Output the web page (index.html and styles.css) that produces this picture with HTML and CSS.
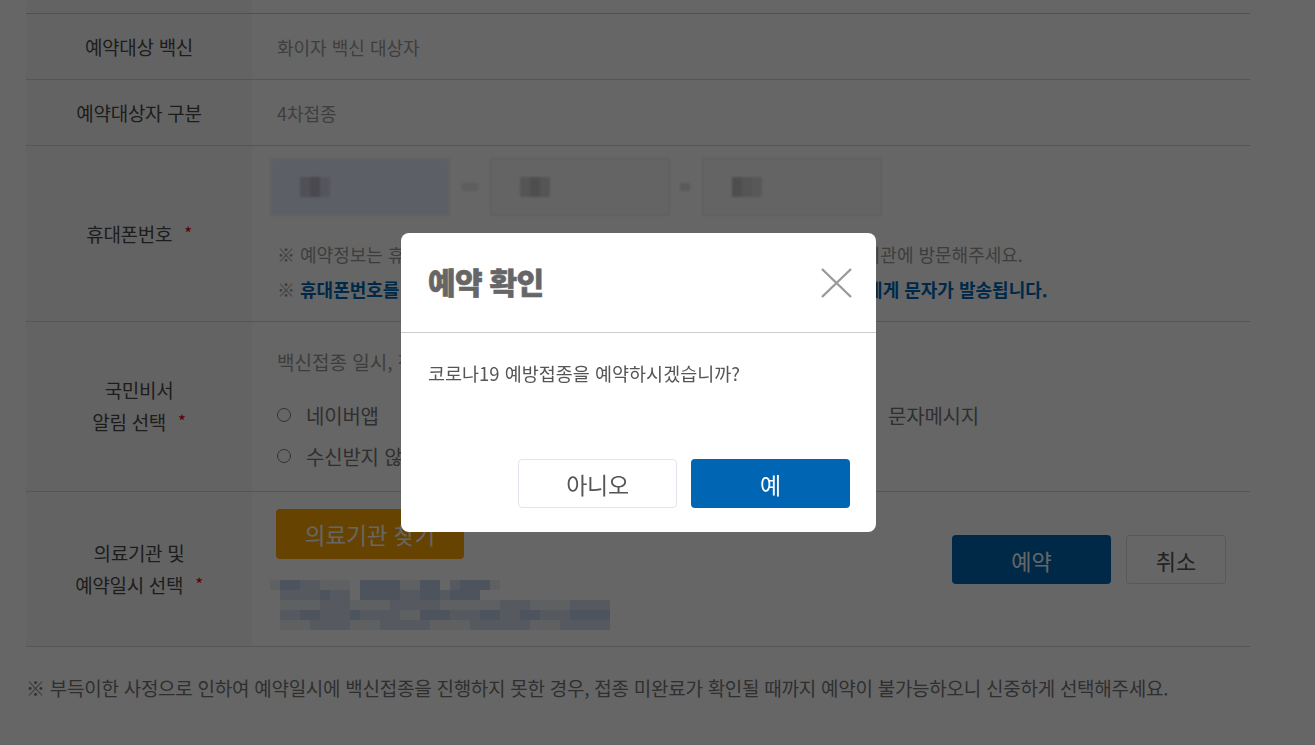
FILE: index.html
```html
<!DOCTYPE html>
<html lang="ko">
<head>
<meta charset="utf-8">
<title>예약 확인</title>
<link rel="stylesheet" href="styles.css">
</head>
<body>
<div class="page">
  <div class="form">
    <div class="row row-top"><div class="th"></div><div class="td"></div></div>
    <div class="row row-s">
      <div class="th"><span>예약대상 백신</span></div>
      <div class="td val">화이자 백신 대상자</div>
    </div>
    <div class="row row-s">
      <div class="th"><span>예약대상자 구분</span></div>
      <div class="td val">4차접종</div>
    </div>
    <div class="row row-phone">
      <div class="th"><span>휴대폰번호<span class="req">*</span></span></div>
      <div class="td phone-td">
        <div class="phone">
          <div class="pbox pbox-first"><span class="blk blk-a"></span><span class="blk blk-b"></span><span class="blk blk-c"></span></div>
          <span class="dash"></span>
          <div class="pbox"><span class="blk blk-d"></span><span class="blk blk-e"></span><span class="blk blk-d"></span></div>
          <span class="dash dash-sm"></span>
          <div class="pbox"><span class="blk blk-e"></span><span class="blk blk-d"></span><span class="blk blk-f"></span></div>
        </div>
        <p class="note note-first">※ 예약정보는 휴대폰 문자로 발송되며, 문자를 받지 못하신 경우 예약하신 의료기관에 방문해주세요.</p>
        <p class="note"><span>※</span> <b class="blue">휴대폰번호를 정확하게 입력해주세요. 입력하신 휴대폰번호로 예약하신 본인에게 문자가 발송됩니다.</b></p>
      </div>
    </div>
    <div class="row row-alarm">
      <div class="th th-2"><span>국민비서<br>알림 선택<span class="req">*</span></span></div>
      <div class="td alarm-td">
        <p class="desc">백신접종 일시, 장소 등 안내를 받으실 알림 수단을 선택해주세요.</p>
        <div class="radios">
          <label class="radio"><span class="circle"></span>네이버앱</label>
          <label class="radio"><span class="circle"></span>카카오톡</label>
          <label class="radio"><span class="circle"></span>문자메시지</label>
          <label class="radio"><span class="circle"></span>수신받지 않음</label>
          <label class="radio"><span class="circle"></span>토스</label>
        </div>
      </div>
    </div>
    <div class="row row-hosp">
      <div class="th th-2"><span>의료기관 및<br>예약일시 선택<span class="req">*</span></span></div>
      <div class="td hosp-td">
        <div class="hosp-left">
          <button class="btn-find" type="button">의료기관 찾기</button>
          <div class="mosaic">
            <div class="mrow"><i class="m l w1"></i><i class="m d w2"></i><i class="m n w2"></i><i class="m l w3"></i><i class="m e w1"></i><i class="m d w4"></i><i class="m l w2"></i><i class="m d w2"></i><i class="m e w1"></i><i class="m n w1"></i><i class="m d w3"></i><i class="m l w1"></i></div>
            <div class="mrow mrow-in"><i class="m n w4"></i><i class="m d w1"></i><i class="m n w2"></i><i class="m e w1"></i><i class="m d w4"></i><i class="m n w2"></i><i class="m d w2"></i><i class="m n w1"></i><i class="m d w3"></i></div>
            <div class="mrow mrow-in"><i class="m l w4"></i><i class="m n w3"></i><i class="m l w4"></i><i class="m n w5"></i><i class="m l w6"></i><i class="m n w3"></i><i class="m l w4"></i><i class="m n w4"></i></div>
            <div class="mrow mrow-in"><i class="m n w2"></i><i class="m d w2"></i><i class="m n w3"></i><i class="m d w1"></i><i class="m n w4"></i><i class="m l w2"></i><i class="m d w3"></i><i class="m n w3"></i><i class="m d w2"></i><i class="m n w2"></i><i class="m d w2"></i><i class="m n w3"></i><i class="m d w4"></i></div>
            <div class="mrow mrow-in"><i class="m l w3"></i><i class="m n w4"></i><i class="m l w3"></i><i class="m n w5"></i><i class="m l w4"></i><i class="m n w6"></i><i class="m l w3"></i><i class="m n w5"></i></div>
          </div>
        </div>
        <div class="actions">
          <button class="btn btn-primary" type="button">예약</button>
          <button class="btn btn-line" type="button">취소</button>
        </div>
      </div>
    </div>
  </div>
  <p class="foot">※ 부득이한 사정으로 인하여 예약일시에 백신접종을 진행하지 못한 경우, 접종 미완료가 확인될 때까지 예약이 불가능하오니 신중하게 선택해주세요.</p>
</div>

<div class="overlay"></div>
<div class="modal" role="dialog">
  <div class="modal-head">
    <h2 class="modal-title">예약 확인</h2>
    <button class="modal-close" type="button" aria-label="닫기">
      <svg width="32" height="32" viewBox="0 0 32 32"><path d="M2 2L31 30M31 2L2 30" stroke="#9a9a9a" stroke-width="2.4" fill="none"/></svg>
    </button>
  </div>
  <div class="modal-body">코로나19 예방접종을 예약하시겠습니까?</div>
  <div class="modal-foot">
    <button class="mbtn mbtn-no" type="button">아니오</button>
    <button class="mbtn mbtn-yes" type="button">예</button>
  </div>
</div>
</body>
</html>
```
FILE: styles.css
```css
* { box-sizing: border-box; }
html, body { margin: 0; padding: 0; }
body {
  width: 1315px;
  height: 745px;
  overflow: hidden;
  background: #fff;
  font-family: "Noto Sans CJK KR", "Noto Sans", sans-serif;
  color: #555;
}
p { margin: 0; }
button { font-family: inherit; cursor: pointer; }

.page { padding-left: 26px; width: 1250px; }

.row {
  display: grid;
  grid-template-columns: 226px 998px;
  border-bottom: 1px solid #d4d4d4;
}
.th {
  background: #f8f8f8;
  display: flex;
  align-items: center;
  justify-content: center;
  text-align: center;
  font-size: 19px;
  letter-spacing: -0.3px;
  color: #4a4a4a;
}
.th-2 { line-height: 32px; }
.td { padding-left: 25px; }
.val {
  display: flex;
  align-items: center;
  font-size: 18px;
  color: #9c9c9c;
}
.req { color: #e60012; margin-left: 12px; font-size: 17px; position: relative; top: -2px; }

.row-top { height: 14px; border-bottom-color: #c8c8c8; }
.row-s { height: 66px; }
.row-phone { height: 176px; }
.row-alarm { height: 170px; }
.row-hosp { height: 155px; }

/* phone */
.phone-td { padding-top: 11px; }
.phone {
  display: flex;
  align-items: center;
  margin-left: -7px;
  height: 60px;
  filter: blur(1.2px);
}
.pbox {
  width: 180px;
  height: 58px;
  background: #fbfbfb;
  border: 2px solid #eeeeee;
  display: flex;
  align-items: center;
  padding-left: 28px;
}
.pbox-first { background: #e6edfd; border-color: #f2f2f2; }
.blk { display: inline-block; width: 10px; height: 20px; }
.blk-a { background: #c9c9d6; }
.blk-b { background: #b6b6c6; }
.blk-c { background: #d3d8e6; }
.blk-d { background: #d6d4d4; }
.blk-e { background: #c6c2c2; }
.blk-f { background: #dcdcdc; }
.dash { width: 40px; height: 8px; background: linear-gradient(90deg, transparent 12px, #eaeaea 12px, #eaeaea 28px, transparent 28px); }
.dash-sm { width: 32px; background: linear-gradient(90deg, transparent 10px, #e2e2e2 10px, #e2e2e2 20px, transparent 20px); }

.note {
  font-size: 18px;
  line-height: 35px;
  color: #9a9a9a;
  white-space: nowrap;
}
.note-first { margin-top: 20px; }
.blue { color: #0068b7; font-weight: 700; letter-spacing: 0; }

/* alarm */
.alarm-td { padding-top: 25px; }
.desc { font-size: 19px; line-height: 30px; color: #9a9a9a; }
.radios {
  display: grid;
  grid-template-columns: repeat(3, 291px);
  row-gap: 11px;
  margin-top: 23px;
}
.radio {
  display: flex;
  align-items: center;
  height: 30px;
  font-size: 20px;
  letter-spacing: -0.2px;
  color: #777;
}
.circle {
  width: 14px;
  height: 14px;
  border: 1.5px solid #808080;
  border-radius: 50%;
  margin-right: 15px;
  flex: none;
}

/* hospital */
.hosp-td {
  display: flex;
  justify-content: space-between;
  align-items: flex-start;
  padding: 17px 24px 0 24px;
}
.btn-find {
  width: 188px;
  height: 50px;
  border: 0;
  border-radius: 4px;
  background: #ffa800;
  color: #fff;
  font-size: 22.5px;
  padding: 0;
}
.mosaic { margin: 21px 0 0 -6px; filter: blur(0.6px); }
.mrow { display: flex; height: 10px; }
.mrow-in { padding-left: 10px; }
.m { display: block; height: 10px; }
.w1 { width: 10px; } .w2 { width: 20px; } .w3 { width: 30px; }
.w4 { width: 40px; } .w5 { width: 50px; } .w6 { width: 60px; }
.d { background: #c2d2ec; }
.n { background: #d6dff0; }
.l { background: #eef0f6; }
.e { background: #ffffff; }

.actions { display: flex; gap: 15px; margin-top: 26px; }
.btn {
  height: 49px;
  border-radius: 4px;
  font-size: 22px;
  padding: 0;
}
.btn-primary { width: 159px; background: #0066b3; border: 0; color: #fff; }
.btn-line { width: 100px; background: #fff; border: 1px solid #dcdcdc; color: #555; }

.foot {
  margin-top: 26px;
  font-size: 19px;
  line-height: 30px;
  letter-spacing: -0.27px;
  color: #777;
  white-space: nowrap;
}

/* overlay + modal */
.overlay {
  position: fixed;
  inset: 0;
  background: rgba(0, 0, 0, 0.6);
}
.modal {
  position: absolute;
  left: 401px;
  top: 233px;
  width: 475px;
  height: 299px;
  background: #fff;
  border-radius: 8px;
  display: flex;
  flex-direction: column;
}
.modal-head {
  height: 100px;
  border-bottom: 1px solid #cccccc;
  display: flex;
  align-items: center;
  justify-content: space-between;
  padding: 0 24px 0 27px;
}
.modal-title {
  margin: 0;
  font-size: 30px;
  font-weight: 900;
  color: #666;
  letter-spacing: -0.7px;
  padding-bottom: 4px;
  -webkit-text-stroke: 0.6px #666;
}
.modal-close {
  border: 0;
  background: none;
  padding: 0;
  width: 32px;
  height: 32px;
  display: block;
}
.modal-close svg { display: block; }
.modal-body {
  padding: 27px 27px 0;
  font-size: 18.5px;
  line-height: 26px;
  color: #555;
}
.modal-foot {
  margin-top: auto;
  display: flex;
  justify-content: flex-end;
  gap: 14px;
  padding: 0 26px 24px;
}
.mbtn {
  width: 159px;
  height: 49px;
  border-radius: 4px;
  font-size: 23px;
  letter-spacing: -0.3px;
  padding: 0;
}
.mbtn-no { background: #fff; border: 1px solid #e3e5ee; color: #555; }
.mbtn-yes { background: #0066b3; border: 0; color: #fff; }
```
